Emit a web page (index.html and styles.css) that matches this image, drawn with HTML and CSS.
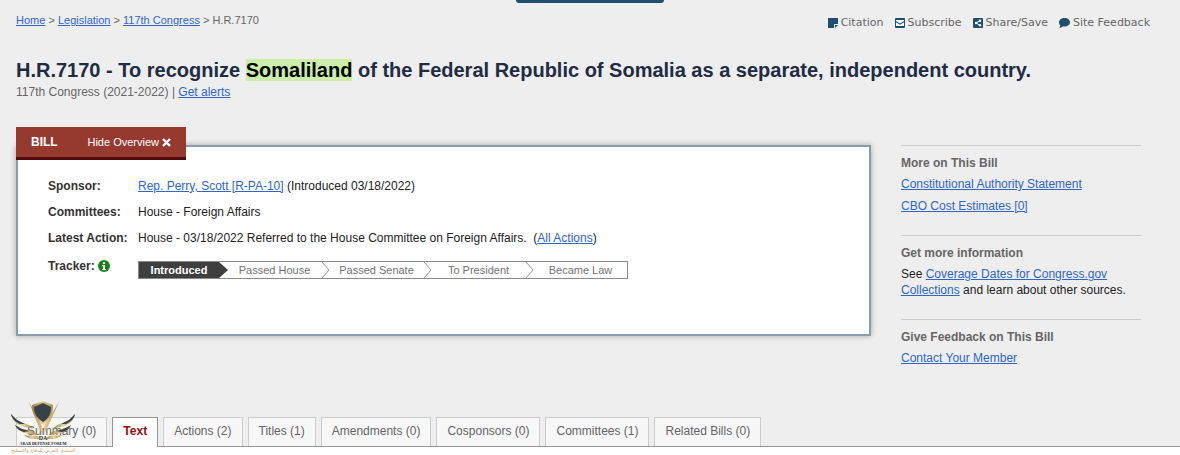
FILE: index.html
```
<!DOCTYPE html>
<html lang="en">
<head>
    <meta charset="UTF-8">
    <meta name="viewport" content="width=device-width, initial-scale=1.0">
    <title>H.R.7170 - 117th Congress (2021-2022)</title>
    <link rel="stylesheet" href="styles.css">
</head>
<body>
    <div class="page">
        <div class="nav-edge"></div>

        <header class="top-bar">
            <nav class="breadcrumbs">
                <a href="#">Home</a> &gt; <a href="#">Legislation</a> &gt; <a href="#">117th Congress</a> &gt; H.R.7170
            </nav>
            <div class="tools">
                <button type="button" class="tool">
                    <svg width="10" height="10" viewBox="0 0 10 10"><path fill="#1f4e6f" d="M0 0h10v6H6v4H0z"/><path fill="#1f4e6f" d="M7 7h3L7 10z"/></svg>
                    Citation
                </button>
                <button type="button" class="tool">
                    <svg width="10" height="10" viewBox="0 0 10 10"><rect width="10" height="10" rx="1" fill="#1f4e6f"/><path fill="#fff" d="M1 2h8v1L5 5.500 1 3zM1 4.200l4 2.500 4-2.500V8H1z"/></svg>
                    Subscribe
                </button>
                <button type="button" class="tool">
                    <svg width="10" height="10" viewBox="0 0 10 10"><rect width="10" height="10" rx="1" fill="#1f4e6f"/><path d="M7 2.800L3 5l4 2.200" fill="none" stroke="#fff"/><circle cx="7" cy="2.800" r="1.200" fill="#fff"/><circle cx="3" cy="5" r="1.200" fill="#fff"/><circle cx="7" cy="7.200" r="1.200" fill="#fff"/></svg>
                    Share/Save
                </button>
                <button type="button" class="tool">
                    <svg width="11" height="10" viewBox="0 0 11 10"><path fill="#1f4e6f" d="M5.500 0C8.600 0 11 1.900 11 4.300S8.600 8.600 5.500 8.600c-.7 0-1.300-.1-1.900-.2C2.700 9.300 1.500 9.800.2 9.900c.6-.7 1-1.500 1.100-2.400C.5 6.600 0 5.500 0 4.300 0 1.900 2.400 0 5.500 0z"/></svg>
                    Site Feedback
                </button>
            </div>
        </header>

        <div class="title">
            <h1>H.R.7170 - To recognize <mark>Somaliland</mark> of the Federal Republic of Somalia as a separate, independent country.</h1>
            <p>117th Congress (2021-2022) | <a href="#">Get alerts</a></p>
        </div>

        <div class="layout">
            <main class="main">
                <div class="bill-tab">
                    <strong>BILL</strong>
                    <button type="button" class="hide-btn">
                        Hide Overview
                        <svg width="9" height="9" viewBox="0 0 9 9"><path d="M1 1l7 7M8 1L1 8" stroke="#fff" stroke-width="2.400"/></svg>
                    </button>
                </div>
                <section class="overview">
                    <table class="overview-table">
                        <tr>
                            <th scope="row">Sponsor:</th>
                            <td><a href="#">Rep. Perry, Scott [R-PA-10]</a> (Introduced 03/18/2022)</td>
                        </tr>
                        <tr>
                            <th scope="row">Committees:</th>
                            <td>House - Foreign Affairs</td>
                        </tr>
                        <tr>
                            <th scope="row">Latest Action:</th>
                            <td>House - 03/18/2022 Referred to the House Committee on Foreign Affairs.&nbsp; (<a href="#">All Actions</a>)</td>
                        </tr>
                        <tr class="tracker-row">
                            <th scope="row">
                                <span class="tracker-label">Tracker:
                                    <svg width="12" height="12" viewBox="0 0 12 12"><circle cx="6" cy="6" r="6" fill="#1a821a"/><path fill="#fff" d="M5 2h2v2H5zM4 5h3v4h1v1H4V9h1V6H4z"/></svg>
                                </span>
                            </th>
                            <td>
                                <ol class="tracker">
                                    <li class="current"><span>Introduced</span><svg width="9" height="16" viewBox="0 0 9 16"><path fill="#3f3f3f" d="M0 0l9 8-9 8z"/></svg></li>
                                    <li><span>Passed House</span><svg width="9" height="16" viewBox="0 0 9 16"><path d="M1 0l7 8-7 8" fill="none" stroke="#999"/></svg></li>
                                    <li><span>Passed Senate</span><svg width="9" height="16" viewBox="0 0 9 16"><path d="M1 0l7 8-7 8" fill="none" stroke="#999"/></svg></li>
                                    <li><span>To President</span><svg width="9" height="16" viewBox="0 0 9 16"><path d="M1 0l7 8-7 8" fill="none" stroke="#999"/></svg></li>
                                    <li><span>Became Law</span></li>
                                </ol>
                            </td>
                        </tr>
                    </table>
                </section>
            </main>

            <aside class="sidebar">
                <section>
                    <h2>More on This Bill</h2>
                    <ul>
                        <li><a href="#">Constitutional Authority Statement</a></li>
                        <li><a href="#">CBO Cost Estimates [0]</a></li>
                    </ul>
                </section>
                <section>
                    <h2>Get more information</h2>
                    <p>See <a href="#">Coverage Dates for Congress.gov Collections</a> and learn about other sources.</p>
                </section>
                <section>
                    <h2>Give Feedback on This Bill</h2>
                    <ul>
                        <li><a href="#">Contact Your Member</a></li>
                    </ul>
                </section>
            </aside>
        </div>

        <nav class="tabs">
            <a href="#">Summary (0)</a>
            <a href="#" class="active">Text</a>
            <a href="#">Actions (2)</a>
            <a href="#">Titles (1)</a>
            <a href="#">Amendments (0)</a>
            <a href="#">Cosponsors (0)</a>
            <a href="#">Committees (1)</a>
            <a href="#">Related Bills (0)</a>

            <div class="watermark">
                <svg width="66" height="38" viewBox="0 0 66 38">
                    <defs>
                        <linearGradient id="gold" x1="0" x2="1">
                            <stop offset="0" stop-color="#8d6a2c"/>
                            <stop offset="0.500" stop-color="#e8c983"/>
                            <stop offset="1" stop-color="#a37c37"/>
                        </linearGradient>
                    </defs>
                    <!-- wings -->
                    <g fill="url(#gold)">
                        <path d="M1 13c3 5 7 7 12 9 5 1 8 3 10 6-5-2-9-2-13-4C5 22 2 18 1 13z"/>
                        <path d="M5 24c4 4 8 4 13 5 4 1 7 2 9 5-5-1-9-1-13-2-4-2-7-4-9-8z"/>
                        <path d="M14 34c5 1 9 0 13 1l4 3c-5 0-12 1-17-4z"/>
                        <path d="M65 13c-3 5-7 7-12 9-5 1-8 3-10 6 5-2 9-2 13-4 5-2 8-6 9-11z"/>
                        <path d="M61 24c-4 4-8 4-13 5-4 1-7 2-9 5 5-1 9-1 13-2 4-2 7-4 9-8z"/>
                        <path d="M52 34c-5 1-9 0-13 1l-4 3c5 0 12 1 17-4z"/>
                        <path d="M19 1l13 24v9zM49 1L34 25v9z"/>
                    </g>
                    <g fill="#17232c">
                        <path d="M1 13l6 6 8 4-5 0C6 21 2 18 1 13zM5 24l7 4 8 2-6 1c-4-1-7-3-9-7z"/>
                        <path d="M65 13l-6 6-8 4 5 0c4-2 8-5 9-10zM61 24l-7 4-8 2 6 1c4-1 7-3 9-7z"/>
                    </g>
                    <!-- shield -->
                    <path fill="url(#gold)" d="M22 4l11-4 10 4c0 9-3 14-10 20-8-6-11-11-11-20z"/>
                    <path fill="#17232c" d="M24 6l9-4 8 4c0 7-2 11-8 15-6-4-9-8-9-15z"/>
                </svg>
                <span class="mark-initials">DA</span>
                <span class="mark-name">ARAB DEFENSE FORUM</span>
                <span class="mark-arabic" lang="ar" dir="rtl">المنتدى العربي للدفاع والتسليح</span>
            </div>
        </nav>
    </div>
    <div class="tab-content"></div>
</body>
</html>
```
FILE: styles.css
```
* {
    margin: 0;
    padding: 0;
    box-sizing: border-box;
}

body {
    display: flex;
    flex-direction: column;
    min-height: 100vh;
    font-family: "Liberation Sans", Arial, sans-serif;
    font-size: 12px;
    line-height: 16px;
    color: #222;
    background: #fff;
}

a {
    color: #2f66cc;
}

button {
    font: inherit;
    color: inherit;
    background: none;
    border: none;
    cursor: pointer;
}

ul,
ol {
    list-style: none;
}

.page {
    background: #eee;
}

.tab-content {
    flex: 1;
    min-height: 8px;
    background: #fff;
}

.nav-edge {
    width: 148px;
    height: 3px;
    margin: 0 auto;
    background: #1f4e6f;
    border-radius: 0 0 3px 3px;
}

.top-bar {
    display: flex;
    justify-content: space-between;
    padding: 9px 30px 0 16px;
    font-size: 11px;
    color: #666;
}

.tools {
    display: flex;
    gap: 11px;
    padding-top: 3px;
}

.tool {
    display: flex;
    align-items: center;
    gap: 3px;
    font-family: "DejaVu Sans", Verdana, sans-serif;
}

.title {
    padding: 27px 16px 0;
    color: #666;
}

.title h1 {
    font-size: 20px;
    line-height: 24px;
    margin-bottom: 2px;
    color: #202b45;
}

.title mark {
    color: #000;
    background: #cbeea9;
}

.layout {
    display: flex;
    gap: 30px;
    padding: 27px 39px 0 16px;
}

.main {
    flex: 1;
}

/* Bill overview */
.bill-tab {
    position: relative;
    display: flex;
    align-items: center;
    justify-content: space-between;
    width: 170px;
    height: 33px;
    padding: 0 15px;
    color: #fff;
    background: #963a30;
    border-bottom: 3px solid #500c0c;
}

.hide-btn {
    display: flex;
    align-items: center;
    gap: 3px;
    font-size: 11px;
}

.overview {
    margin-top: -15px;
    padding: 26px 30px 50px;
    background: #fff;
    border: 2px solid #869ca8;
    box-shadow: 0 0 6px rgba(0, 0, 0, 0.3);
}

.overview-table {
    width: 100%;
    border-collapse: collapse;
}

.overview-table th {
    width: 90px;
    padding: 5px 0;
    text-align: left;
    white-space: nowrap;
    vertical-align: top;
    color: #333;
}

.overview-table td {
    padding: 5px 0;
}

.overview-table .tracker-row > * {
    padding-top: 7px;
}

.tracker-label {
    display: flex;
    align-items: center;
    gap: 3px;
}

.tracker {
    display: flex;
    max-width: 490px;
    height: 18px;
    margin-top: 3px;
    font-size: 11px;
    color: #737373;
    border: 1px solid #8a8a8a;
}

.tracker li {
    display: flex;
    flex: 1 1 102px;
}

.tracker span {
    flex: 1;
    text-align: center;
}

.tracker .current {
    flex: 0 0 89px;
    font-weight: bold;
    color: #fff;
}

.tracker .current span {
    background: #3f3f3f;
}

.tracker li:last-child {
    flex: 0 1 93px;
}

/* Sidebar */
.sidebar {
    width: 240px;
    padding-top: 18px;
}

.sidebar section {
    padding: 9px 0 18px;
    border-top: 1px solid #ccc;
}

.sidebar h2 {
    font-size: 12px;
    margin-bottom: 2px;
    color: #666;
}

.sidebar li {
    line-height: 22px;
}

.sidebar p {
    padding: 3px 0;
}

/* Tabs */
.tabs {
    position: relative;
    display: flex;
    gap: 5px;
    margin-top: 30px;
    padding: 0 16px;
    border-bottom: 1px solid #979797;
}

.tabs a {
    height: 29px;
    padding: 5px 10px;
    color: #666;
    text-decoration: none;
    background: #f7f7f7;
    border: 1px solid #ccc;
    border-bottom: none;
}

.tabs .active {
    height: 30px;
    margin-bottom: -1px;
    font-weight: bold;
    color: #980b10;
    background: #fff;
    border-color: #979797;
}

/* Forum mark laid over the first tab */
.watermark {
    position: absolute;
    left: 10px;
    bottom: -8px;
    display: flex;
    flex-direction: column;
    align-items: center;
    white-space: nowrap;
}

.watermark svg {
    margin-bottom: -3px;
    opacity: 0.85;
}

.mark-initials,
.mark-name {
    font-family: "Liberation Serif", serif;
    font-weight: bold;
    color: #17232c;
}

.mark-initials {
    font-size: 6px;
    line-height: 5px;
}

.mark-name {
    font-size: 4px;
    line-height: 5px;
}

.mark-arabic {
    font-family: "DejaVu Sans", sans-serif;
    font-size: 5px;
    line-height: 8px;
    color: #c79f58;
}
```
